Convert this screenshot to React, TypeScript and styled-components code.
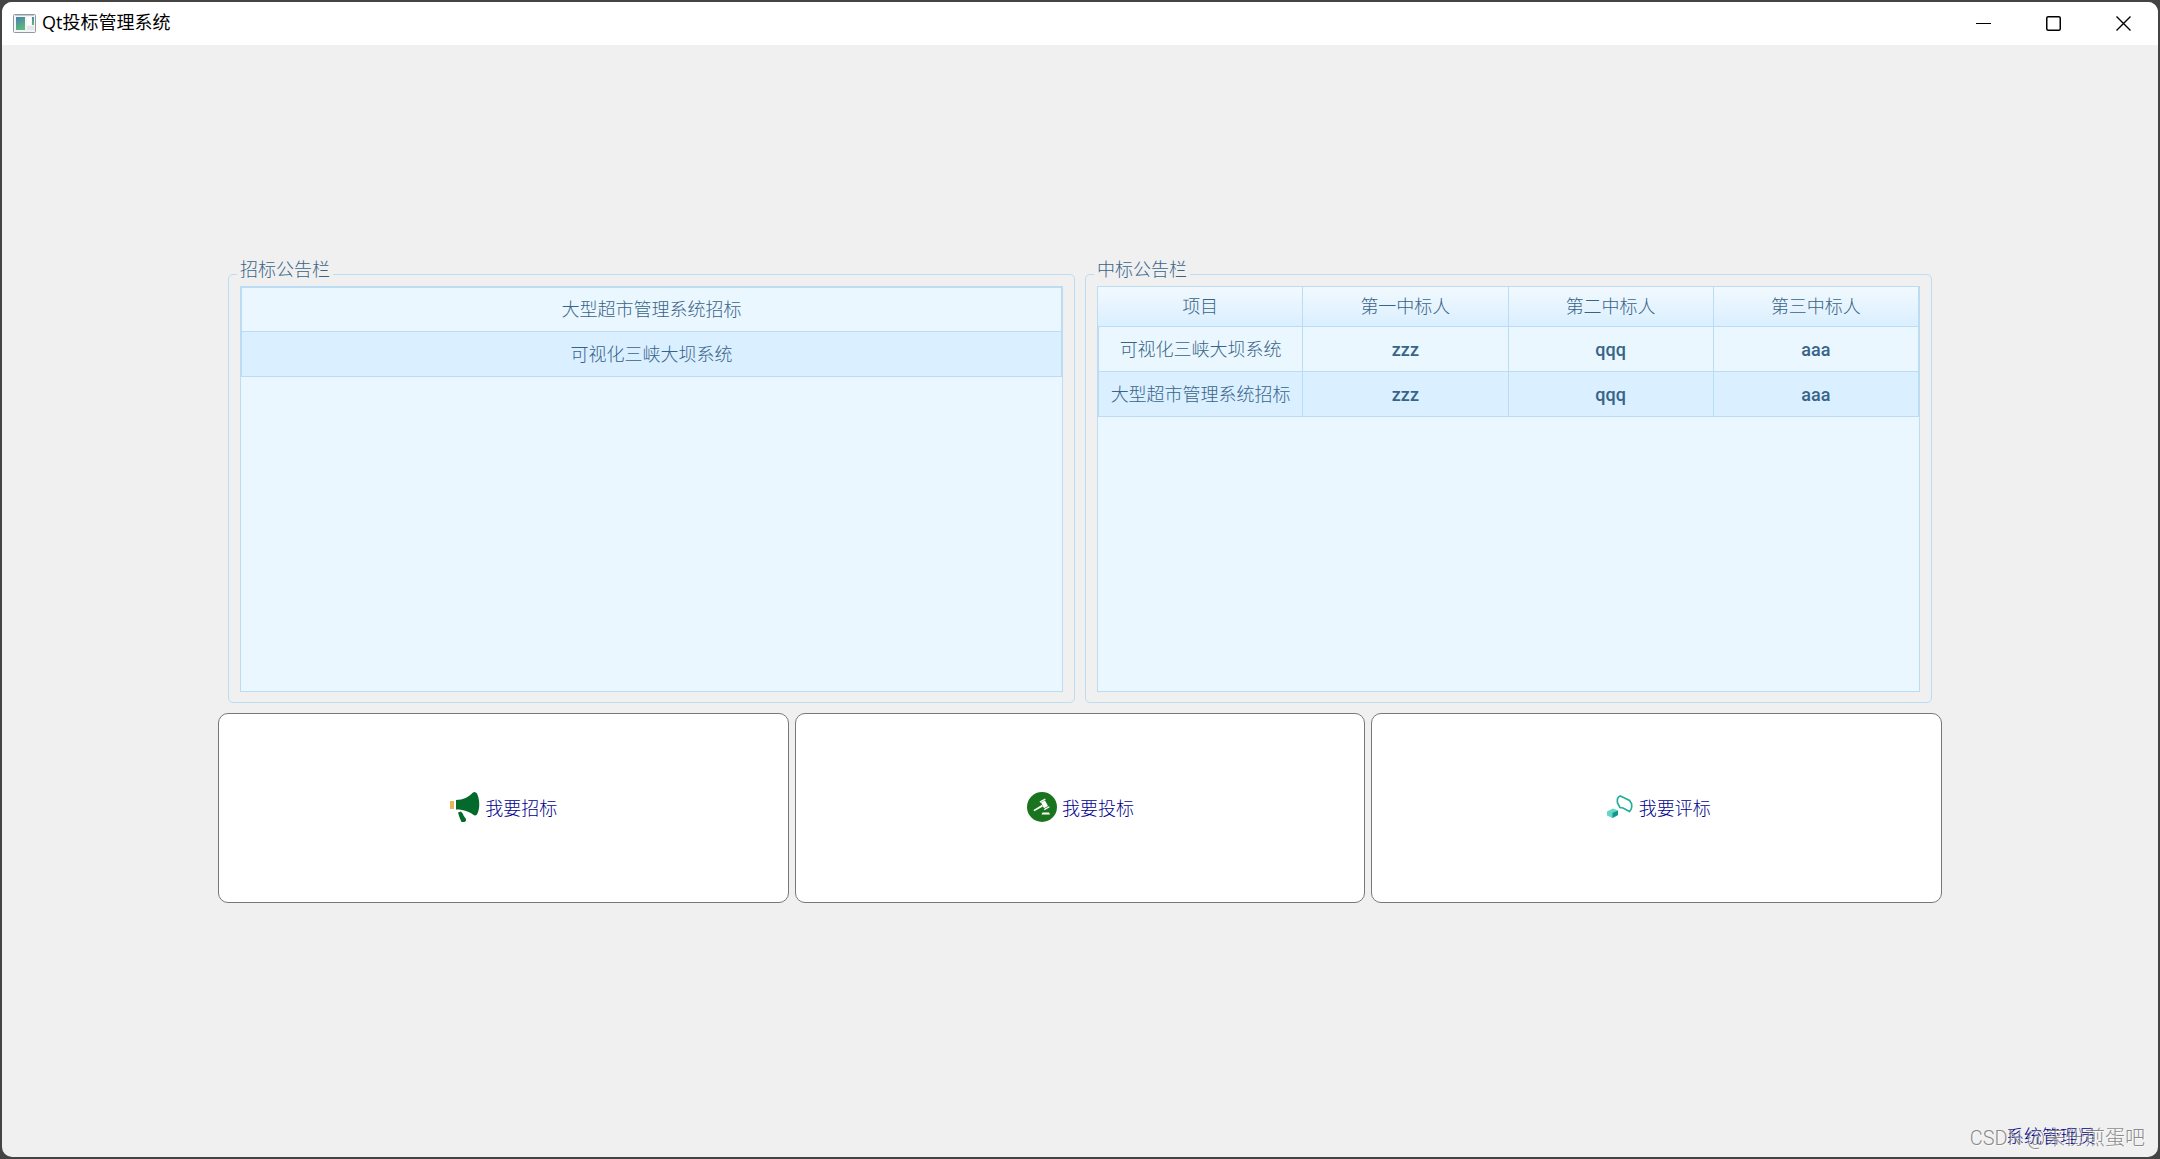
import React from "react";
import styled, { createGlobalStyle, css } from "styled-components";

const line = "#bcdcf4";
const ink = "#386487";
const surface = "#f0f0f0";

const GlobalStyle = createGlobalStyle`
  *, *::before, *::after { box-sizing: border-box; }
  body {
    margin: 0;
    background: #444;
    font-family: "Liberation Sans", "Noto Sans CJK SC", sans-serif;
    font-size: 18px;
    line-height: 24px;
    color: ${ink};
  }
`;

const Frame = styled.div`
  min-height: 100vh;
  padding: 2px;
  display: flex;
`;

const AppWindow = styled.div`
  position: relative;
  flex: 1;
  display: flex;
  flex-direction: column;
  overflow: hidden;
  border-radius: 10px;
  background: ${surface};
`;

const TitleBar = styled.header`
  display: flex;
  align-items: center;
  height: 43px;
  padding-left: 11px;
  background: #fff;
  color: #000;
`;

const Title = styled.h1`
  flex: 1;
  margin: 0;
  padding: 0 0 4px 5px;
  font: 400 18px/24px "Open Sans", "Noto Sans CJK SC", sans-serif;
`;

const WindowButton = styled.button`
  display: grid;
  place-items: center;
  width: 70px;
  height: 43px;
  padding: 0;
  border: 0;
  background: none;
`;

const Main = styled.main`
  flex: 1;
  display: flex;
  flex-direction: column;
  justify-content: center;
  gap: 10px;
  padding: 0 10vw;
`;

const Boards = styled.div`
  display: grid;
  grid-template-columns: 1fr 1fr;
  gap: 10px;
  padding: 17px 10px 0;
`;

const Board = styled.section`
  border: 1px solid ${line};
  border-radius: 5px;
  padding: 0 11px 10px;
`;

const BoardTitle = styled.h2`
  width: fit-content;
  margin: -17px 0 4px -3px;
  padding: 0 3px;
  background: ${surface};
  font-size: 18px;
  font-weight: 300;
  line-height: 24px;
`;

const TableView = styled.div`
  min-height: 406px;
  border: 1px solid ${line};
  background: #eaf7ff;
`;

const Table = styled.table`
  width: 100%;
  table-layout: fixed;
  border-collapse: separate;
  border-spacing: 0;
`;

const cell = css`
  padding: 0;
  text-align: center;
  border-bottom: 1px solid ${line};
  border-right: 1px solid ${line};
`;

const HeadCell = styled.th`
  ${cell}
  height: 40px;
  font-weight: 300;
  background: linear-gradient(#f2f9fe, #daefff);
`;

const Cell = styled.td<{ $latin?: boolean }>`
  ${cell}
  height: 45px;
  padding-top: 1px;
  ${(p) => p.$latin
    ? css`font-family: Roboto, "Liberation Sans", sans-serif; font-weight: 500;`
    : css`font-weight: 300;`}
  &:first-child { border-left: 1px solid ${line}; }
`;

const Row = styled.tr`
  &:nth-child(even) { background: #daefff; }
`;

const Body = styled.tbody<{ $topLine?: boolean }>`
  ${(p) => p.$topLine && css`
    tr:first-child td { border-top: 1px solid ${line}; }
  `}
`;

const Actions = styled.nav`
  display: grid;
  grid-template-columns: repeat(3, 1fr);
  gap: 6px;
`;

const ActionButton = styled.button`
  display: flex;
  align-items: center;
  justify-content: center;
  gap: 4px;
  height: 190px;
  padding: 0 0 2px;
  border: 1px solid #787878;
  border-radius: 10px;
  background: #fff;
  color: #00008b;
  font: 300 18px/24px "Noto Sans CJK SC", sans-serif;
`;

const Footer = styled.footer`
  display: flex;
  justify-content: flex-end;
  height: 42px;
  padding: 10px 62px 0 0;
`;

const AdminLink = styled.a`
  color: #00008b;
  font-weight: 300;
  text-decoration: none;
`;

const Watermark = styled.span`
  position: absolute;
  right: 13px;
  bottom: 5px;
  color: rgba(110, 110, 110, 0.8);
  font: 300 20px/28px Roboto, "Noto Sans CJK SC", sans-serif;
  text-shadow: 1px 1px 0 rgba(255, 255, 255, 0.7);
  pointer-events: none;
`;

const AppIcon = () => (
  <svg width="24" height="20" viewBox="0 0 24 20" aria-hidden="true">
    <defs>
      <linearGradient id="pane" x1="0" y1="0" x2="0.4" y2="1">
        <stop offset="0" stopColor="#4a7fb0" />
        <stop offset="1" stopColor="#5cb87c" />
      </linearGradient>
    </defs>
    <rect x="0.5" y="0.5" width="22" height="18" rx="1" fill="#f4f5f7" stroke="#9098a3" />
    <path d="M2 1.5h19" stroke="#c5cad1" />
    <rect x="3" y="3" width="9" height="13" fill="url(#pane)" />
    <rect x="14" y="3" width="4" height="8" fill="#fff" />
    <rect x="19" y="3" width="2" height="8" fill="url(#pane)" />
    <rect x="14" y="12" width="7" height="4" fill="#e4e6e8" />
  </svg>
);

const MinimizeIcon = () => (
  <svg width="15" height="15" viewBox="0 0 15 15" aria-hidden="true">
    <path d="M0 7.5h15" stroke="#000" />
  </svg>
);

const MaximizeIcon = () => (
  <svg width="15" height="15" viewBox="0 0 15 15" aria-hidden="true">
    <rect x="0.75" y="0.75" width="13.5" height="13.5" rx="1.5" fill="none" stroke="#000" strokeWidth="1.5" />
  </svg>
);

const CloseIcon = () => (
  <svg width="15" height="15" viewBox="0 0 15 15" aria-hidden="true">
    <path d="M0.5 0.5l14 14M14.5 0.5l-14 14" stroke="#000" strokeWidth="1.4" />
  </svg>
);

const MegaphoneIcon = () => (
  <svg width="32" height="32" viewBox="0 0 32 32" aria-hidden="true">
    <rect x="1" y="10" width="4" height="8" fill="#e2b659" />
    <path d="M7 9C14 9 20 6 24 1.500Q26 0 28 2.500C31 9 31 18 28 23.500Q26 25.500 24 23.500C19 20 14 18.500 7 18.500Z" fill="#046a2c" />
    <path d="M9 21.500L12 20.500Q14 22.500 14.500 24.500L17 28Q17.500 30.500 15 31H12.500Q10.500 27 9 21.500Z" fill="#046a2c" />
  </svg>
);

const GavelIcon = () => (
  <svg width="32" height="32" viewBox="0 0 32 32" aria-hidden="true">
    <circle cx="16" cy="16" r="15" fill="#1a741e" />
    <g fill="#fff">
      <path d="M15 11.500L19 9.400L22 15L18 17.200Z" />
      <path d="M13.500 10.600L19 7.600L19.600 8.700L14.200 11.700ZM18 18L23 15.200L23.700 16.300L18.600 19.200Z" />
      <path d="M16 13.800L16.900 15.400L8.300 20.200L7.500 18.900Z" />
      <path d="M16.500 21.500h6.500l1 2h-8.500Z" />
    </g>
  </svg>
);

const ReviewIcon = () => (
  <svg width="32" height="32" viewBox="0 0 32 32" aria-hidden="true">
    <path d="M4 20.500L10 17.500L15 19.500V24L9.500 27L4 24.500Z" fill="#66d6c6" />
    <path d="M9.500 22L15 19.500V24L9.500 27Z" fill="#12988a" />
    <path d="M17 5Q13.500 6.500 14.500 12L17 16.500L20 17L26.500 20.500Q29.500 18 28.500 12.500L26.500 9.500L20.500 6.500L17 5Z" fill="none" stroke="#25ac9c" strokeWidth="1.7" />
  </svg>
);

const tenders = ["大型超市管理系统招标", "可视化三峡大坝系统"];
const awardColumns = ["项目", "第一中标人", "第二中标人", "第三中标人"];
const awards = [
  ["可视化三峡大坝系统", "zzz", "qqq", "aaa"],
  ["大型超市管理系统招标", "zzz", "qqq", "aaa"],
];
const actions = [
  { label: "我要招标", Icon: MegaphoneIcon },
  { label: "我要投标", Icon: GavelIcon },
  { label: "我要评标", Icon: ReviewIcon },
];

export default function App() {
  return (
    <Frame>
      <GlobalStyle />
      <AppWindow>
        <TitleBar>
          <AppIcon />
          <Title>Qt投标管理系统</Title>
          <WindowButton type="button" aria-label="最小化"><MinimizeIcon /></WindowButton>
          <WindowButton type="button" aria-label="最大化"><MaximizeIcon /></WindowButton>
          <WindowButton type="button" aria-label="关闭"><CloseIcon /></WindowButton>
        </TitleBar>
        <Main>
          <Boards>
            <Board aria-labelledby="tenders">
              <BoardTitle id="tenders">招标公告栏</BoardTitle>
              <TableView>
                <Table aria-labelledby="tenders">
                  <Body $topLine>
                    {tenders.map((name) => (
                      <Row key={name}><Cell>{name}</Cell></Row>
                    ))}
                  </Body>
                </Table>
              </TableView>
            </Board>
            <Board aria-labelledby="awards">
              <BoardTitle id="awards">中标公告栏</BoardTitle>
              <TableView>
                <Table aria-labelledby="awards">
                  <thead>
                    <tr>
                      {awardColumns.map((name) => (
                        <HeadCell key={name} scope="col">{name}</HeadCell>
                      ))}
                    </tr>
                  </thead>
                  <Body>
                    {awards.map((award) => (
                      <Row key={award[0]}>
                        {award.map((value, i) => (
                          <Cell key={i} $latin={i > 0}>{value}</Cell>
                        ))}
                      </Row>
                    ))}
                  </Body>
                </Table>
              </TableView>
            </Board>
          </Boards>
          <Actions>
            {actions.map(({ label, Icon }) => (
              <ActionButton key={label} type="button">
                <Icon />
                {label}
              </ActionButton>
            ))}
          </Actions>
        </Main>
        <Footer>
          <AdminLink href="#admin">系统管理员</AdminLink>
        </Footer>
        <Watermark>CSDN @来份煎蛋吧</Watermark>
      </AppWindow>
    </Frame>
  );
}
